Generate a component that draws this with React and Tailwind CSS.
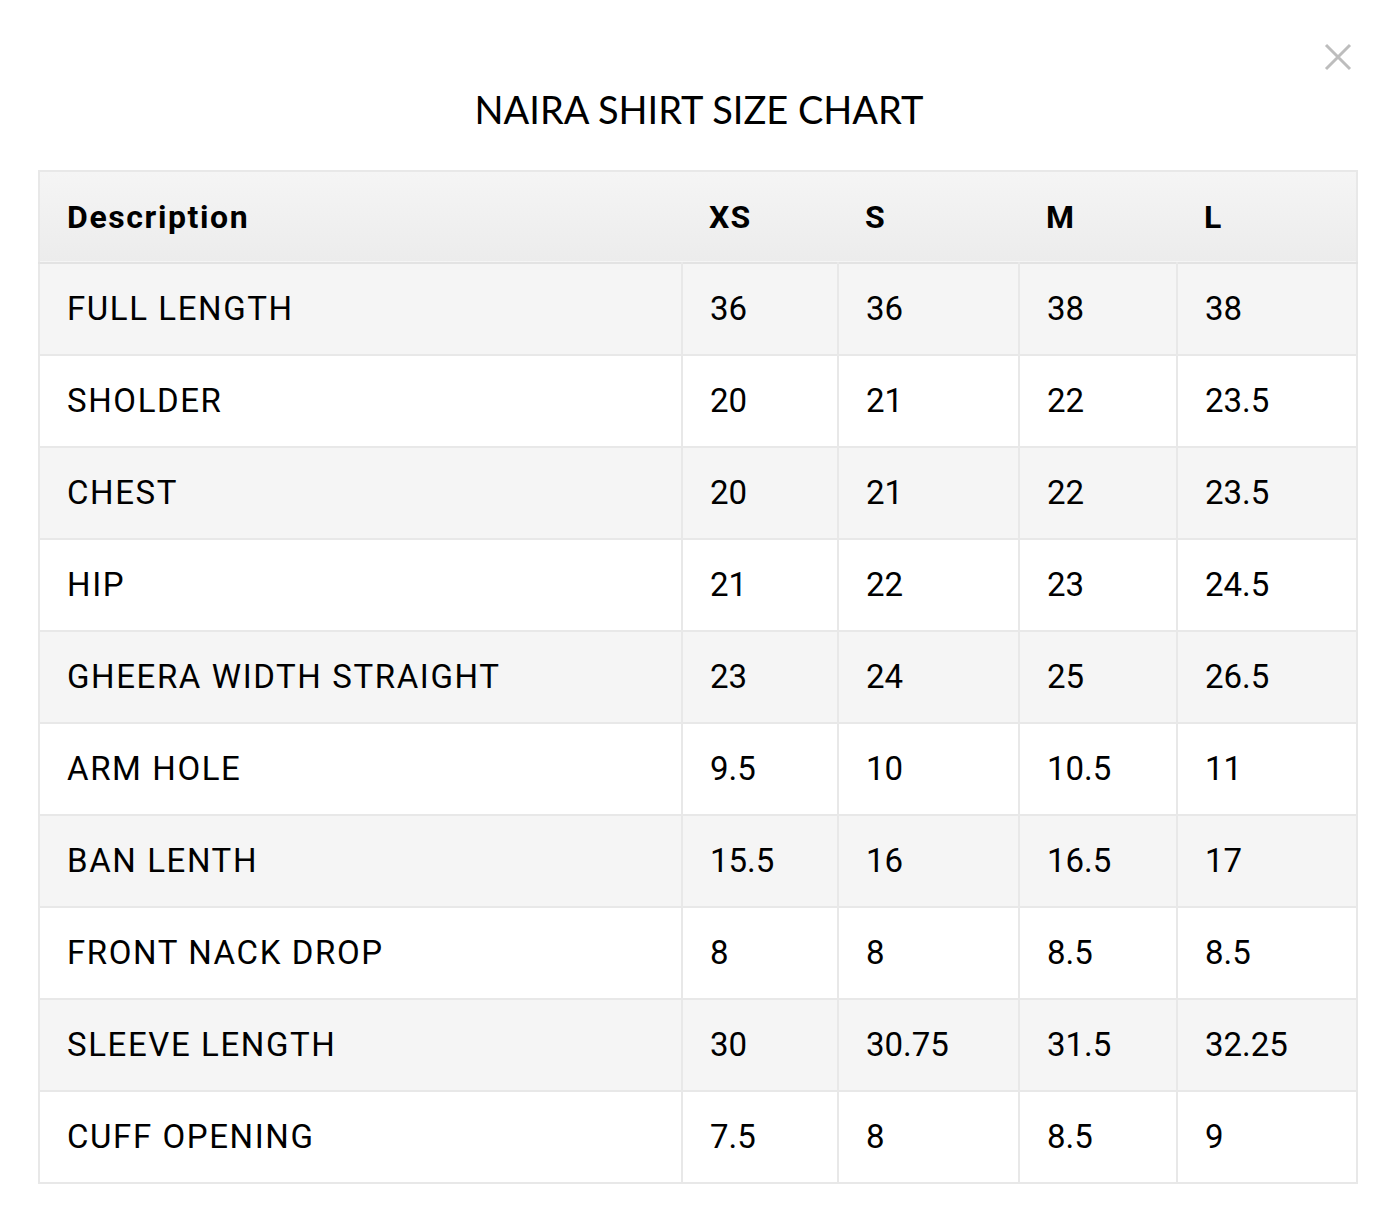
import React from "react";

const sizes = ["XS", "S", "M", "L"];

const rows = [
  ["FULL LENGTH", "36", "36", "38", "38"],
  ["SHOLDER", "20", "21", "22", "23.5"],
  ["CHEST", "20", "21", "22", "23.5"],
  ["HIP", "21", "22", "23", "24.5"],
  ["GHEERA WIDTH STRAIGHT", "23", "24", "25", "26.5"],
  ["ARM HOLE", "9.5", "10", "10.5", "11"],
  ["BAN LENTH", "15.5", "16", "16.5", "17"],
  ["FRONT NACK DROP", "8", "8", "8.5", "8.5"],
  ["SLEEVE LENGTH", "30", "30.75", "31.5", "32.25"],
  ["CUFF OPENING", "7.5", "8", "8.5", "9"],
];

function App() {
  return (
    <div className="w-[1398px] h-[1227px] bg-white relative">
      <button className="absolute top-[42px] right-[45px] w-[30px] h-[30px] text-[#bdbdbd]">
        <svg viewBox="0 0 30 30" className="w-full h-full">
          <path d="M3 3 L27 27 M27 3 L3 27" stroke="currentColor" strokeWidth="3" fill="none" />
        </svg>
      </button>

      <div className="pt-[85px] px-[38px]">
        <h2
          className="text-center text-[38px] leading-[48px] text-black"
          style={{ fontFamily: "Lato, 'Noto Sans', sans-serif" }}
        >
          NAIRA SHIRT SIZE CHART
        </h2>

        <table
          className="mt-[37px] w-[1318px] border-collapse border-2 border-[#e8e8e8] table-fixed text-black"
          style={{ fontFamily: "Roboto, 'Liberation Sans', sans-serif" }}
        >
          <colgroup>
            <col className="w-[643px]" />
            <col className="w-[156px]" />
            <col className="w-[181px]" />
            <col className="w-[158px]" />
            <col className="w-[180px]" />
          </colgroup>
          <thead>
            <tr className="h-[92px] bg-gradient-to-b from-[#f5f5f5] to-[#ececec] border-b-2 border-[#e3e3e3]">
              <th className="text-left font-bold text-[32px] pl-[27px] tracking-[1.6px]">Description</th>
              {sizes.map((s) => (
                <th key={s} className="text-left font-bold text-[32px] pl-[27px] tracking-[1.2px]">
                  {s}
                </th>
              ))}
            </tr>
          </thead>
          <tbody>
            {rows.map((r, i) => (
              <tr
                key={r[0]}
                className={`h-[92px] border-b-2 border-[#e8e8e8] ${i % 2 === 0 ? "bg-[#f5f5f5]" : "bg-white"}`}
              >
                {r.map((c, j) => (
                  <td
                    key={j}
                    className={
                      j === 0
                        ? "text-left text-[33px] pl-[27px] tracking-[1.6px]"
                        : "text-left text-[33px] pl-[27px] tracking-[0px] border-l-2 border-[#e8e8e8]"
                    }
                  >
                    {c}
                  </td>
                ))}
              </tr>
            ))}
          </tbody>
        </table>
      </div>
    </div>
  );
}

export default App;
